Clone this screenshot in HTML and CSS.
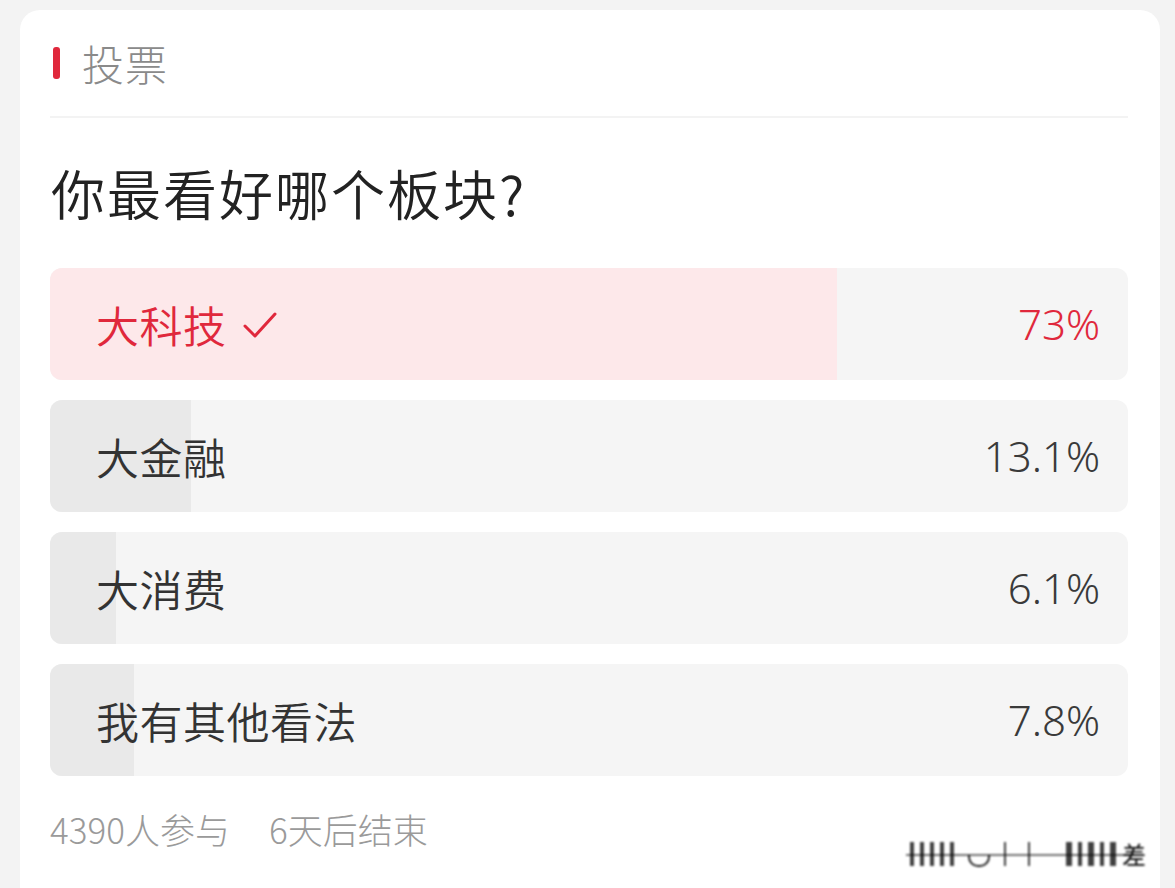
FILE: index.html
```html
<!DOCTYPE html>
<html lang="zh-CN">
<head>
<meta charset="utf-8">
<title>投票</title>
<link rel="stylesheet" href="styles.css">
</head>
<body>
<div class="card">
  <div class="header">
    <span class="mark"></span>
    <span class="header-title">投票</span>
  </div>
  <div class="question">你最看好哪个板块?</div>
  <div class="options">
    <div class="option selected">
      <div class="fill" style="width:73%"></div>
      <div class="label">大科技
        <svg class="check" width="34" height="30" viewBox="0 0 34 30"><path d="M2 16 L12 26 L32 4" fill="none" stroke="#e0283c" stroke-width="3" stroke-linecap="round" stroke-linejoin="round"/></svg>
      </div>
      <div class="pct">73%</div>
    </div>
    <div class="option">
      <div class="fill" style="width:13.1%"></div>
      <div class="label">大金融</div>
      <div class="pct">13.1%</div>
    </div>
    <div class="option">
      <div class="fill" style="width:6.1%"></div>
      <div class="label">大消费</div>
      <div class="pct">6.1%</div>
    </div>
    <div class="option">
      <div class="fill" style="width:7.8%"></div>
      <div class="label">我有其他看法</div>
      <div class="pct">7.8%</div>
    </div>
  </div>
  <div class="footer">
    <span>4390人参与</span>
    <span>6天后结束</span>
  </div>
  <div class="watermark">
    <i class="b t"></i><i class="b"></i><i class="b"></i><i class="b"></i><i class="b"></i>
    <i class="arc"></i>
    <i class="b thin"></i><i class="b thin gap"></i>
    <i class="b wide"></i><i class="b"></i><i class="b wide"></i><i class="b"></i><i class="b wide"></i>
    <span class="wm-char">差</span>
  </div>
</div>
</body>
</html>
```

FILE: styles.css
```css
html, body {
  margin: 0;
  padding: 0;
}
body {
  background: #f3f3f3;
  font-family: "Noto Sans CJK SC", "Noto Sans", sans-serif;
  width: 1175px;
  height: 888px;
  overflow: hidden;
}
.card {
  position: relative;
  box-sizing: border-box;
  margin: 10px 0 0 20px;
  width: 1140px;
  height: 900px;
  background: #ffffff;
  border-radius: 20px;
  padding: 0 32px 0 30px;
}
.header {
  height: 106px;
  display: flex;
  align-items: center;
  border-bottom: 2px solid #f3f3f3;
}
.mark {
  width: 7px;
  height: 32px;
  background: #e0283c;
  border-radius: 3px;
  margin-left: 3px;
}
.header-title {
  margin-left: 22px;
  font-size: 42px;
  letter-spacing: 1px;
  color: #8a8a8a;
  line-height: 1;
  font-weight: 300;
}
.question {
  height: 150px;
  display: flex;
  align-items: center;
  font-size: 54px;
  letter-spacing: 2px;
  color: #222222;
  line-height: 1;
  padding-left: 1px;
  font-weight: 350;
}
.options {
  display: flex;
  flex-direction: column;
  gap: 20px;
}
.option {
  position: relative;
  height: 112px;
  border-radius: 12px;
  background: #f5f5f5;
  overflow: hidden;
  display: flex;
  align-items: center;
  justify-content: space-between;
  padding: 0 28px 0 46px;
}
.fill {
  position: absolute;
  left: 0;
  top: 0;
  bottom: 0;
  background: #e9e9e9;
}
.option.selected .fill {
  background: #fde8ea;
}
.label {
  position: relative;
  font-size: 43px;
  letter-spacing: 0.5px;
  color: #333333;
  display: flex;
  align-items: center;
  line-height: 1;
  font-weight: 350;
}
.option.selected .label,
.option.selected .pct {
  color: #e0283c;
}
.check {
  margin-left: 16px;
  margin-top: 2px;
}
.pct {
  position: relative;
  font-size: 42px;
  font-family: "Noto Sans", sans-serif;
  font-weight: 300;
  color: #3a3a3a;
  line-height: 1;
}
.footer {
  margin-top: 32px;
  display: flex;
  gap: 39px;
  font-size: 35px;
  color: #9a9a9a;
  line-height: 1.2;
  font-weight: 300;
}
.watermark {
  position: absolute;
  left: 886px;
  top: 830px;
  display: flex;
  align-items: center;
  gap: 6px;
  height: 28px;
  filter: blur(0.8px);
}
.watermark::before {
  content: "";
  position: absolute;
  left: 0;
  right: 12px;
  top: 14px;
  height: 2px;
  background: rgba(0,0,0,0.55);
}
.b {
  display: block;
  width: 4px;
  height: 24px;
  background: rgba(0,0,0,0.75);
}
.b.thin { width: 2px; }
.b.gap { margin-left: 16px; margin-right: 30px; }
.b.wide { width: 6px; }
.b.t { margin-left: 4px; }
.arc {
  display: block;
  width: 18px;
  height: 10px;
  margin: 14px 8px 0;
  border: 2px solid #222;
  border-top: none;
  border-radius: 0 0 10px 10px;
}
.wm-char {
  font-size: 24px;
  color: #000;
  line-height: 1;
}
```
